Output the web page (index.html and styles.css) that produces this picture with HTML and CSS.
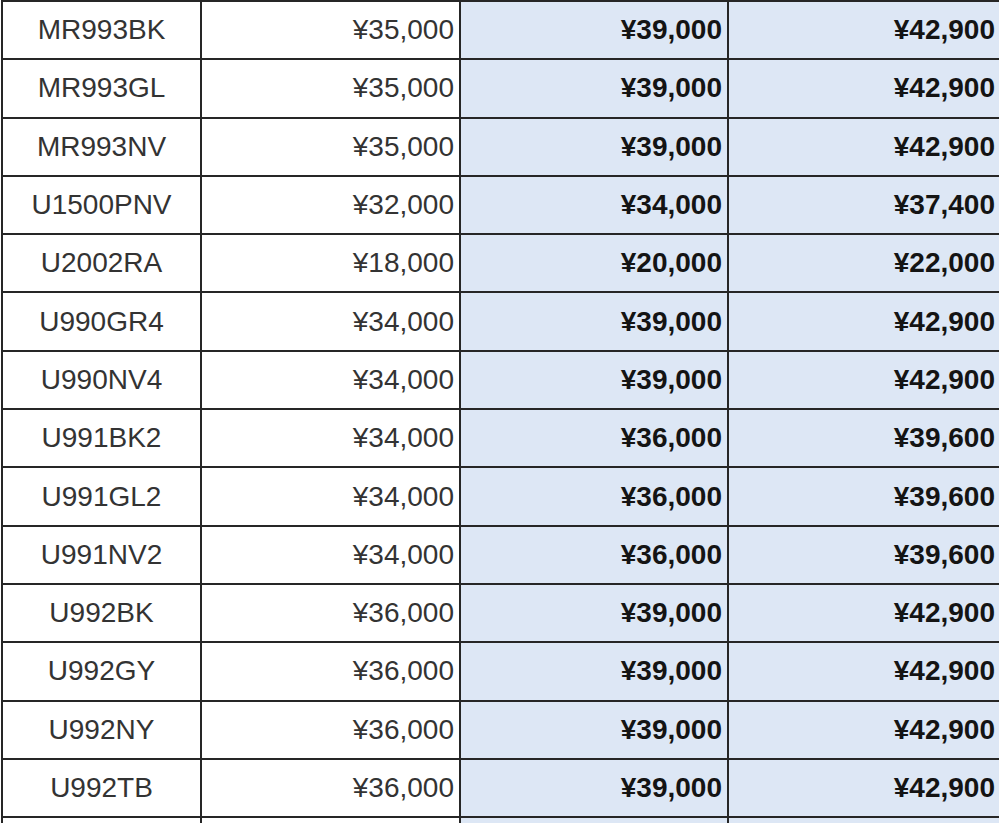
FILE: index.html
```html
<!DOCTYPE html>
<html lang="ja">
<head>
<meta charset="utf-8">
<title>価格表</title>
<link rel="stylesheet" href="styles.css">
</head>
<body>
<table class="price-table">
  <colgroup>
    <col class="c-model">
    <col class="c-old">
    <col class="c-new">
    <col class="c-tax">
  </colgroup>
  <tbody>
    <tr><td class="model">MR993BK</td><td class="old">¥35,000</td><td class="new">¥39,000</td><td class="tax">¥42,900</td></tr>
    <tr><td class="model">MR993GL</td><td class="old">¥35,000</td><td class="new">¥39,000</td><td class="tax">¥42,900</td></tr>
    <tr><td class="model">MR993NV</td><td class="old">¥35,000</td><td class="new">¥39,000</td><td class="tax">¥42,900</td></tr>
    <tr><td class="model">U1500PNV</td><td class="old">¥32,000</td><td class="new">¥34,000</td><td class="tax">¥37,400</td></tr>
    <tr><td class="model">U2002RA</td><td class="old">¥18,000</td><td class="new">¥20,000</td><td class="tax">¥22,000</td></tr>
    <tr><td class="model">U990GR4</td><td class="old">¥34,000</td><td class="new">¥39,000</td><td class="tax">¥42,900</td></tr>
    <tr><td class="model">U990NV4</td><td class="old">¥34,000</td><td class="new">¥39,000</td><td class="tax">¥42,900</td></tr>
    <tr><td class="model">U991BK2</td><td class="old">¥34,000</td><td class="new">¥36,000</td><td class="tax">¥39,600</td></tr>
    <tr><td class="model">U991GL2</td><td class="old">¥34,000</td><td class="new">¥36,000</td><td class="tax">¥39,600</td></tr>
    <tr><td class="model">U991NV2</td><td class="old">¥34,000</td><td class="new">¥36,000</td><td class="tax">¥39,600</td></tr>
    <tr><td class="model">U992BK</td><td class="old">¥36,000</td><td class="new">¥39,000</td><td class="tax">¥42,900</td></tr>
    <tr><td class="model">U992GY</td><td class="old">¥36,000</td><td class="new">¥39,000</td><td class="tax">¥42,900</td></tr>
    <tr><td class="model">U992NY</td><td class="old">¥36,000</td><td class="new">¥39,000</td><td class="tax">¥42,900</td></tr>
    <tr><td class="model">U992TB</td><td class="old">¥36,000</td><td class="new">¥39,000</td><td class="tax">¥42,900</td></tr>
    <tr><td class="model"></td><td class="old"></td><td class="new"></td><td class="tax"></td></tr>
  </tbody>
</table>
</body>
</html>
```
FILE: styles.css
```css
html, body {
  margin: 0;
  padding: 0;
  background: #ffffff;
  overflow: hidden;
}

.price-table {
  border-collapse: collapse;
  table-layout: fixed;
  width: 1010px;
  margin-left: 1px;
  font-family: "Liberation Sans", Arial, "Noto Sans CJK JP", sans-serif;
  font-size: 28px;
}

.c-model { width: 199px; }
.c-old { width: 259px; }
.c-new { width: 268px; }
.c-tax { width: 284px; }

.price-table tr {
  height: 58.3px;
}

.price-table td {
  border: 2px solid #262626;
  padding: 0 5px;
  line-height: 1;
  vertical-align: middle;
  white-space: nowrap;
}

.price-table td.model {
  text-align: center;
  color: #333333;
}

.price-table td.old {
  text-align: right;
  color: #333333;
}

.price-table td.new,
.price-table td.tax {
  text-align: right;
  font-weight: bold;
  color: #141414;
  background: #dde7f5;
}

.price-table td.tax {
  padding-right: 16px;
}
```
